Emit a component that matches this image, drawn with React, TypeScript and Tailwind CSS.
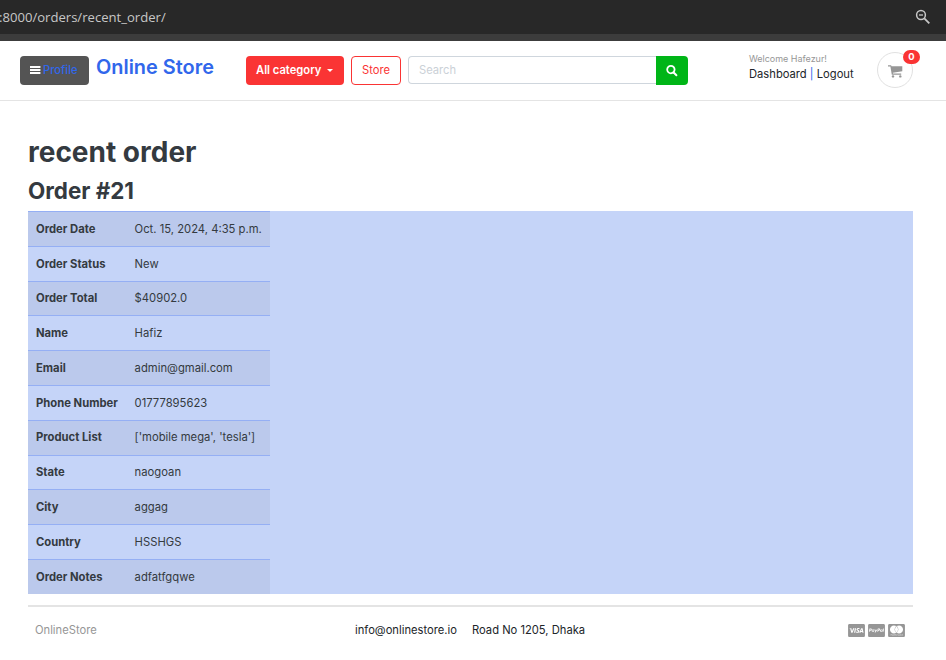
import React from "react";
import { FaCcVisa, FaCcPaypal, FaCcMastercard } from "react-icons/fa";

const rows: [string, string][] = [
  ["Order Date", "Oct. 15, 2024, 4:35 p.m."],
  ["Order Status", "New"],
  ["Order Total", "$40902.0"],
  ["Name", "Hafiz"],
  ["Email", "admin@gmail.com"],
  ["Phone Number", "01777895623"],
  ["Product List", "['mobile mega', 'tesla']"],
  ["State", "naogoan"],
  ["City", "aggag"],
  ["Country", "HSSHGS"],
  ["Order Notes", "adfatfgqwe"],
];

function AddressBar() {
  return (
    <div className="flex h-[41px] items-start justify-between border-b-[7px] border-[#3c3c3c] bg-[#282828] pr-[15px] font-['Open_Sans',sans-serif] text-[#c7c7c7]">
      <span className="-ml-px mt-[7px] whitespace-nowrap text-[13.1px] leading-5">:8000/orders/recent_order/</span>
      <svg className="mt-[9px]" width="16" height="16" viewBox="0 0 16 16" fill="none" stroke="currentColor">
        <circle cx="6" cy="6" r="4.4" strokeWidth="1.5" />
        <path d="M4 6h4" strokeWidth="1.3" />
        <path d="M9.3 9.3l5 5" strokeWidth="1.8" />
      </svg>
    </div>
  );
}

function Header() {
  return (
    <header className="flex h-[60px] items-start border-b border-[#e4e4e4] pl-5">
      <button className="mt-[15px] flex h-[29px] w-[69px] items-center rounded-[4px] bg-[#545454] pl-[10px] text-[11.2px] font-medium text-[#3167eb]">
        <svg width="11" height="9" viewBox="0 0 11 9" fill="#fff">
          <path d="M0 0h10.4v2H0zM0 3h10.4v2H0zM0 6h10.4v2H0z" />
        </svg>
        <span className="ml-[2px]">Profile</span>
      </button>
      <a className="ml-[7px] mt-[12px] w-[150px] whitespace-nowrap text-[19.9px] font-semibold leading-7 text-[#3167eb]">Online Store</a>
      <button className="mt-[15px] flex h-[29px] w-[98px] items-center rounded-[4px] bg-[#fa3434] pl-[10px] text-[11.2px] font-semibold text-white">
        <span className="whitespace-nowrap">All category</span>
        <svg className="ml-[6px]" width="6" height="3" viewBox="0 0 6 3" fill="currentColor">
          <path d="M0 0h6L3 3z" />
        </svg>
      </button>
      <button className="ml-[7px] mt-[15px] h-[29px] w-[50px] rounded-[4px] border border-[#fa3434] text-[11.2px] text-[#fa3434]">Store</button>
      <div className="ml-[7px] mt-[15px] flex h-[29px] w-[280px]">
        <div className="flex h-[28px] flex-1 items-center rounded-l-[4px] border border-r-0 border-[#cfd6dd] pl-[10px] pt-px text-[11.2px] text-[#cbd1d7]">Search</div>
        <button className="flex w-8 items-center justify-center rounded-r-[4px] bg-[#00b517] text-white">
          <svg width="12" height="12" viewBox="0 0 12 12" fill="none" stroke="currentColor">
            <circle cx="4.9" cy="4.6" r="3.7" strokeWidth="1.8" />
            <path d="M7.7 7.5l2.7 2.7" strokeWidth="2" strokeLinecap="round" />
          </svg>
        </button>
      </div>
      <div className="ml-[61px] mt-[12px] w-[128px] whitespace-nowrap">
        <p className="text-[8.96px] leading-[12px] text-[#969696]">Welcome Hafezur!</p>
        <p className="text-[11.2px] leading-[18px] text-[#212529]">
          Dashboard <span className="text-[#3167eb]">|</span> Logout
        </p>
      </div>
      <div className="relative mt-[11px] flex size-9 items-center justify-center rounded-full border border-[#e1e1e1] text-[#969696]">
        <svg className="mt-[2px]" width="15" height="13" viewBox="0 0 15 13" fill="currentColor">
          <path d="M0 .2h2.8c.4 0 .6.4.7 1h10.8v5.1L4.8 7.7l.2.9h8.2v1.2H3.8L2.4 1.4H0z" />
          <circle cx="5" cy="11.4" r="1.2" />
          <circle cx="12.3" cy="11.4" r="1.2" />
        </svg>
        <span className="absolute -top-[3px] left-[25px] flex h-[14px] w-[17px] items-center justify-center rounded-full bg-[#fa3434] text-[9.4px] font-bold text-white">0</span>
      </div>
    </header>
  );
}

function Footer() {
  return (
    <footer className="mt-[11px] flex h-[50px] items-center border-t-2 border-[#e4e4e4] pb-[2px] pl-[7px] pr-2 text-[11.2px] text-[#212529]">
      <span className="w-[320px] text-[#969696]">OnlineStore</span>
      <span className="w-[117px] whitespace-nowrap">info@onlinestore.io</span>
      <span className="flex-1 whitespace-nowrap">Road No 1205, Dhaka</span>
      <span className="flex gap-[3px] text-[#969696]">
        <FaCcVisa className="h-[15px] w-[17px]" />
        <FaCcPaypal className="h-[15px] w-[17px]" />
        <FaCcMastercard className="h-[15px] w-[17px]" />
      </span>
    </footer>
  );
}

export default function App() {
  return (
    <div className="h-[660px] w-[946px] overflow-hidden bg-white font-[Inter,sans-serif] text-[#343a40]">
      <AddressBar />
      <Header />
      <main className="pl-7 pr-[33px] pt-[34px]">
        <h1 className="text-[28px] font-bold leading-[35px]">recent order</h1>
        <h2 className="mt-[7px] text-[22.4px] font-bold leading-7">Order #21</h2>
        <div className="mt-[6px] h-[383px] bg-[#c5d4f8] text-[11.25px] text-[#343a40]">
          {rows.map(([label, value], i) => (
            <div
              key={label}
              className={
                "flex h-[34.8px] w-[242px] items-center whitespace-nowrap border-t border-[#95aff4] pl-2 pt-[0.5px] " +
                (i % 2 === 0 ? "bg-[#bbc9ec]" : "")
              }
            >
              <span className="w-[98.6px] font-bold">{label}</span>
              <span>{value}</span>
            </div>
          ))}
        </div>
        <Footer />
      </main>
    </div>
  );
}
